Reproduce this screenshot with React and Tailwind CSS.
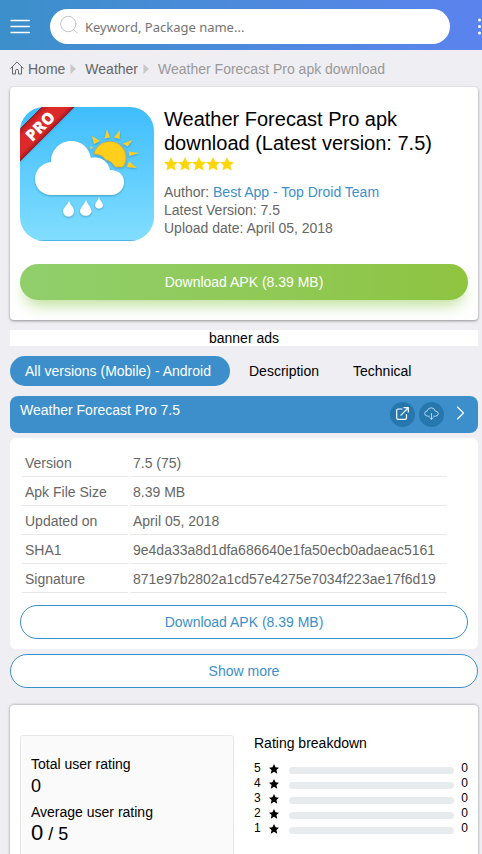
import React from "react";

const details = [
  ["Version", "7.5 (75)"],
  ["Apk File Size", "8.39 MB"],
  ["Updated on", "April 05, 2018"],
  ["SHA1", "9e4da33a8d1dfa686640e1fa50ecb0adaeac5161"],
  ["Signature", "871e97b2802a1cd57e4275e7034f223ae17f6d19"],
];

const ratings = [
  { stars: 5, count: 0 },
  { stars: 4, count: 0 },
  { stars: 3, count: 0 },
  { stars: 2, count: 0 },
  { stars: 1, count: 0 },
];

const STAR = "M7 0 9.200 4.700 14 5.100 10.400 8.500 11.500 13.500 7 10.900 2.500 13.500 3.600 8.500 0 5.100 4.800 4.700Z";

function Header() {
  return (
    <header className="flex h-[50px] items-center gap-5 overflow-hidden bg-linear-to-r from-[#3b8fca] to-[#5b83ee] pt-[3px] pl-2.5">
      <button type="button" aria-label="Menu" className="shrink-0 text-white">
        <svg className="block" width="20" height="20" viewBox="0 0 20 20" fill="none" stroke="currentColor" strokeWidth="1.3" strokeLinecap="round">
          <path d="M1 3.500h18.400M1 9.500h18.400M1 15.500h18.400" />
        </svg>
      </button>
      <form className="flex h-[35px] min-w-0 flex-1 items-center gap-[7px] rounded-full bg-white pl-2.5" onSubmit={(e) => e.preventDefault()}>
        <svg className="mt-1.5 shrink-0 self-start" width="18" height="20" viewBox="0 0 18 20" fill="none" stroke="#c4c4c4" strokeWidth="1" strokeLinecap="round">
          <circle cx="8.300" cy="9" r="7.700" />
          <path d="M13.300 14.300 17.500 18" />
        </svg>
        <input
          type="search"
          aria-label="Search apps"
          placeholder="Keyword, Package name..."
          className="h-full min-w-0 flex-1 rounded-full bg-transparent font-['Noto_Sans',sans-serif] text-[13px] text-gray-800 outline-none placeholder:text-[#757575]"
        />
      </form>
      <button type="button" aria-label="More" className="-mr-4 ml-2 w-5 shrink-0 text-white">
        <svg className="block" width="20" height="20" viewBox="0 0 20 20" fill="currentColor">
          <circle cx="1.500" cy="3" r="1.500" />
          <circle cx="1.500" cy="9.500" r="1.500" />
          <circle cx="1.500" cy="16" r="1.500" />
          <path d="M7 2.500h12v1H7zM7 9h12v1H7zM7 15.500h12v1H7z" />
        </svg>
      </button>
    </header>
  );
}

function Separator() {
  return (
    <svg className="mr-2 ml-[5px] shrink-0" width="7" height="10" viewBox="0 0 7 10" fill="#c8c8ca" aria-hidden="true">
      <path d="M0.500 0 6 5 0.500 10Z" />
    </svg>
  );
}

function Breadcrumb() {
  return (
    <nav aria-label="Breadcrumb" className="flex h-[37px] items-center whitespace-nowrap text-[#666]">
      <a href="#home" className="flex items-start gap-1">
        <svg width="14" height="14" viewBox="0 0 14 14" fill="none" stroke="#666" strokeWidth="1" strokeLinejoin="round" strokeLinecap="round">
          <path d="M0.700 7.300 7 0.900 13.300 7.300M2.500 5.800V13h3V9.500q0-1 1.500-1t1.500 1V13h3V5.800" />
        </svg>
        Home
      </a>
      <Separator />
      <a href="#weather">Weather</a>
      <Separator />
      <span className="text-[#999]">Weather Forecast Pro apk download</span>
    </nav>
  );
}

function AppIcon() {
  return (
    <svg className="block shrink-0" width="134" height="134" viewBox="0 0 134 134" role="img" aria-label="Weather Forecast Pro">
      <defs>
        <linearGradient id="sky" x1="0" y1="0" x2="0" y2="1">
          <stop offset="0" stopColor="#3fbdfc" />
          <stop offset="1" stopColor="#82deff" />
        </linearGradient>
        <linearGradient id="ribbon" gradientUnits="userSpaceOnUse" x1="11" y1="11" x2="27" y2="27">
          <stop offset="0" stopColor="#b51a1e" />
          <stop offset="0.250" stopColor="#dc2a2c" />
          <stop offset="0.800" stopColor="#dc2a2c" />
          <stop offset="1" stopColor="#a8181c" />
        </linearGradient>
        <clipPath id="tile">
          <rect width="134" height="134" rx="24" />
        </clipPath>
        <filter id="soft" x="-20%" y="-20%" width="140%" height="140%">
          <feDropShadow dx="0" dy="1" stdDeviation="1.200" floodColor="#1c5d85" floodOpacity="0.450" />
        </filter>
      </defs>
      <g clipPath="url(#tile)">
        <rect width="134" height="134" fill="url(#sky)" />
        <path d="M0 133.500h134" stroke="#4db5ea" strokeWidth="1" />
        <path d="M-4 26 28-6 60-6-4 58Z" fill="url(#ribbon)" filter="url(#soft)" />
        <path d="M-2 24 24-2M-2 56 56-2" stroke="#8f1418" strokeWidth="0.800" />
        <g fill="#ffcf1a" filter="url(#soft)">
          <path d="M74 47A16.200 16.200 0 1 1 103 60L95 60Q92 54 86 53Q82 47 74 47Z" stroke="#c9a22a" strokeWidth="0.600" />
          <path d="M72 29 80 34 74 37ZM87 22.500 90 30.500 84.500 31.500ZM100 23 99.500 32 94 30.500ZM112.500 33 107.500 39.500 103 36.500ZM119 46 109.500 49 108.700 44.500ZM117 61 107 60 109 54.500ZM71 39 73 41 70 42Z" />
        </g>
        <path
          d="M32 88C22 88 15 81 15 72C15 63 22 56 31 55C31 43 40 34 51 34C62 34 69 41 71 51C80 49 88 54 90 63C99 63 104 68 104 75C104 82 98 88 91 88Z"
          fill="#fff"
          filter="url(#soft)"
        />
        <g fill="#fff" filter="url(#soft)">
          <path d="M49 94C51 99 54 101 54 104A5.500 5.500 0 0 1 43 104C43 101 47 99 49 94Z" />
          <path d="M66 93C68 98 71.500 101 71.500 104.500A6 6 0 0 1 60 104.500C60 101 64 98 66 93Z" />
          <path d="M79 90C80 94 83 96 83 98.500A4.200 4.200 0 0 1 75 98.500C75 96 78 94 79 90Z" />
        </g>
      </g>
      <text x="20" y="25" transform="rotate(-45 20 19)" textAnchor="middle" fill="#fff" fontFamily="Open Sans, sans-serif" fontWeight="800" fontSize="16">PRO</text>
    </svg>
  );
}

function Stars() {
  return (
    <svg className="mt-0.5 block" width="70" height="14" viewBox="0 0 70 14" fill="#ffd60a" role="img" aria-label="4.9 out of 5 stars">
      <path d={STAR} />
      <path d={STAR} transform="translate(14 0)" />
      <path d={STAR} transform="translate(28 0)" />
      <path d={STAR} transform="translate(42 0)" />
      <path d={STAR} transform="translate(56 0)" />
    </svg>
  );
}

function Summary() {
  return (
    <section className="rounded bg-white px-2.5 py-5 shadow-[0_1px_3px_rgba(0,0,0,0.4)]">
      <div className="flex gap-2.5">
        <AppIcon />
        <div className="min-w-0">
          <h1 className="text-[20px] leading-6">Weather Forecast Pro apk download (Latest version: 7.5)</h1>
          <Stars />
          <div className="mt-3 leading-[18px] text-[#666]">
            <p>Author: <a href="#author" className="text-[#3c8fca]">Best App - Top Droid Team</a></p>
            <p>Latest Version: 7.5</p>
            <p>Upload date: April 05, 2018</p>
          </div>
        </div>
      </div>
      <button type="button" className="mt-[23px] block h-9 w-full rounded-full bg-linear-to-r from-[#90cf6c] to-[#8fc440] text-white shadow-[0_10px_15px_-5px_rgba(143,200,80,0.6)]">
        Download APK (8.39 MB)
      </button>
    </section>
  );
}

function VersionBar() {
  return (
    <div className="mt-2.5 flex h-[37px] items-start justify-between rounded-lg bg-[#3c8fca] pr-3 pl-2.5 text-white">
      <h2 className="pt-1.5 leading-4">Weather Forecast Pro 7.5</h2>
      <div className="flex items-center gap-1 pt-1.5">
        <a href="#open" aria-label="Open version" className="flex size-[25px] items-center justify-center rounded-full bg-[#2677ad] pb-[3px]">
          <svg width="13" height="13" viewBox="0 0 13 13" fill="none" stroke="currentColor" strokeWidth="1.200" strokeLinecap="round" strokeLinejoin="round">
            <path d="M6 2H2.200Q0.700 2 0.700 3.500V11Q0.700 12.400 2.200 12.400H9Q10.500 12.400 10.500 11V7.500M5 8.200 12 1M8 0.700H12.300V5" />
          </svg>
        </a>
        <a href="#download" aria-label="Download version" className="flex size-[25px] items-center justify-center rounded-full bg-[#2677ad] pb-[3px]">
          <svg width="15" height="13" viewBox="0 0 15 13" fill="none" stroke="#c5e1f4" strokeWidth="0.900" strokeLinecap="round" strokeLinejoin="round">
            <path d="M5.200 9.200H3.500Q0.700 8.800 0.700 6.500Q0.800 4.200 3.200 4Q4 0.800 7.200 0.800Q10.500 0.900 11.200 4Q14.200 4.200 14.300 6.600Q14.200 9 11.500 9.200H9.800M7.500 6.500V12.200M5.900 10.700 7.500 12.300 9.100 10.700" />
          </svg>
        </a>
        <button type="button" aria-label="Expand version" className="ml-2 pb-[3px]">
          <svg className="block" width="10" height="14" viewBox="0 0 10 14" fill="none" stroke="currentColor" strokeWidth="1.100" strokeLinecap="round" strokeLinejoin="round">
            <path d="M1.500 1 7.500 7 1.500 13" />
          </svg>
        </button>
      </div>
    </div>
  );
}

function Details() {
  return (
    <section className="mt-[5px] rounded-md bg-white p-2.5">
      <table className="border-separate border-spacing-0.5 text-left text-[#666]">
        <tbody>
          {details.map(([label, value]) => (
            <tr key={label}>
              <th scope="row" className="w-[106px] border-b border-[#e8e8e8] px-[3px] py-[5px] font-normal">{label}</th>
              <td className="w-[317px] border-b border-[#e8e8e8] px-[3px] py-[5px]">{value}</td>
            </tr>
          ))}
        </tbody>
      </table>
      <button type="button" className="mt-2.5 block h-[34px] w-full rounded-full border border-[#3c8fca] bg-white text-[#3c8fca]">
        Download APK (8.39 MB)
      </button>
    </section>
  );
}

function Ratings() {
  return (
    <section className="mt-[17px] grid grid-cols-2 gap-5 rounded bg-white px-2.5 pt-[30px] pb-10 shadow-[0_0_3px_rgba(0,0,0,0.4)]">
      <div className="rounded-[3px] border border-[#e8e8e8] bg-[#fafafa] px-2.5 pt-5 pb-10">
        <h3>Total user rating</h3>
        <p className="text-[18px] leading-7">0</p>
        <h3 className="mt-1">Average user rating</h3>
        <p className="text-[18px] leading-[26px]"><span className="text-[22px]">0</span> / 5</p>
      </div>
      <div>
        <h3>Rating breakdown</h3>
        <ul className="mt-2.5 text-[12px] leading-[15px]">
          {ratings.map(({ stars, count }) => (
            <li key={stars} className="flex items-center">
              <span className="w-[15px]">{stars}</span>
              <svg className="mt-px" width="10" height="10" viewBox="0 0 14 14" aria-hidden="true">
                <path d={STAR} />
              </svg>
              <span className="mt-1 ml-2.5 h-[7px] flex-1 rounded-full bg-[#e7ebee]" />
              <span className="ml-[7px]">{count}</span>
            </li>
          ))}
        </ul>
      </div>
    </section>
  );
}

export default function App() {
  return (
    <div className="min-h-screen bg-[#efeef3] font-['Liberation_Sans',Arial,sans-serif] text-[14px] leading-4 text-black">
      <Header />
      <main className="pr-1 pb-5 pl-2.5">
        <Breadcrumb />
        <Summary />
        <div className="mt-2.5 bg-white text-center">banner ads</div>
        <div className="mt-2.5 flex h-[30px] gap-1">
          <button type="button" className="min-w-[220px] rounded-full bg-[#3c8fca] px-[15px] text-left text-white">All versions (Mobile) - Android</button>
          <button type="button" className="px-[15px]">Description</button>
          <button type="button" className="px-[15px]">Technical</button>
        </div>
        <VersionBar />
        <Details />
        <button type="button" className="mt-[5px] block h-[34px] w-full rounded-full border border-[#3c8fca] bg-white text-[#3c8fca]">
          Show more
        </button>
        <Ratings />
      </main>
    </div>
  );
}
